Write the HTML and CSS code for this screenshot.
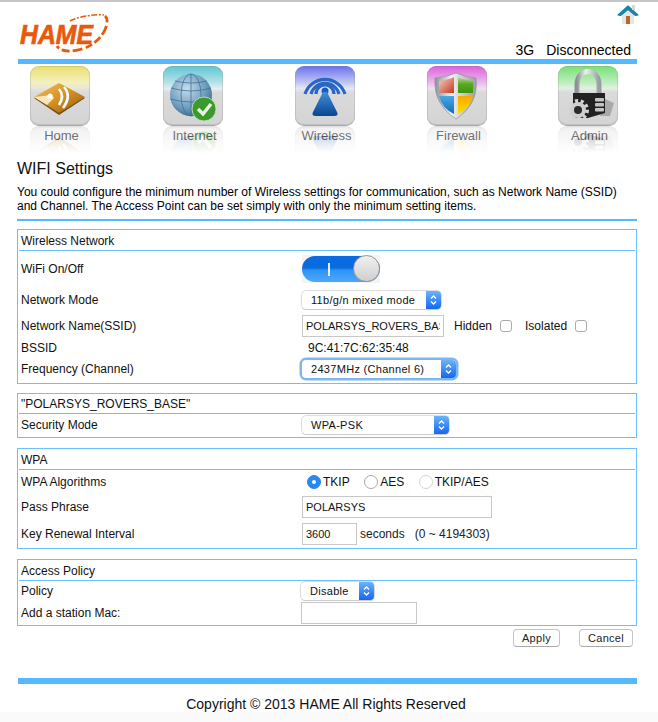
FILE: index.html
```html
<!DOCTYPE html>
<html lang="en">
<head>
<meta charset="utf-8">
<title>WIFI Settings</title>
<link rel="stylesheet" href="styles.css">
</head>
<body>
<svg class="defs" width="0" height="0" aria-hidden="true">
  <defs>
    <linearGradient id="gold" x1="0" y1="0" x2="1" y2="1"><stop offset="0" stop-color="#f0c060"/><stop offset=".5" stop-color="#d89020"/><stop offset="1" stop-color="#8a5a18"/></linearGradient>
    <radialGradient id="globe" cx=".4" cy=".35" r=".75"><stop offset="0" stop-color="#c8dcea"/><stop offset=".6" stop-color="#6f9dbd"/><stop offset="1" stop-color="#2f5f88"/></radialGradient>
    <linearGradient id="tower" x1="0" y1="0" x2="0" y2="1"><stop offset="0" stop-color="#3f8fd8"/><stop offset="1" stop-color="#0b4590"/></linearGradient>
    <linearGradient id="steel" x1="0" y1="0" x2="1" y2="0"><stop offset="0" stop-color="#8e9296"/><stop offset=".4" stop-color="#f0f0f0"/><stop offset="1" stop-color="#9a9ea2"/></linearGradient>
    <linearGradient id="qRed" x1="0" y1="0" x2="1" y2="1"><stop offset="0" stop-color="#f2d4c8"/><stop offset="1" stop-color="#c8381c"/></linearGradient>
    <linearGradient id="qGreen" x1="0" y1="0" x2="0" y2="1"><stop offset="0" stop-color="#b8dca0"/><stop offset=".45" stop-color="#5aa820"/><stop offset="1" stop-color="#3f9410"/></linearGradient>
    <linearGradient id="qBlue" x1="0" y1="0" x2="0" y2="1"><stop offset="0" stop-color="#49a8e8"/><stop offset="1" stop-color="#0f6cb8"/></linearGradient>
    <linearGradient id="qYellow" x1="0" y1="0" x2="0" y2="1"><stop offset="0" stop-color="#f8a800"/><stop offset="1" stop-color="#fbe000"/></linearGradient>
    <linearGradient id="blueBtn" x1="0" y1="0" x2="0" y2="1"><stop offset="0" stop-color="#6cb2fb"/><stop offset="1" stop-color="#1568ee"/></linearGradient>
  </defs>
</svg>
<div class="page">
  <header class="top">
    <svg class="logo" width="90" height="42" viewBox="0 0 90 42">
      <text class="logo-text" x="0" y="30" textLength="73" lengthAdjust="spacingAndGlyphs">HAME</text>
      <path d="M50 7 C60 2 76 0 84 1" fill="none" stroke="#e8590c" stroke-width="1.4" stroke-dasharray="6 1.5 2 1.5"/>
      <path d="M85 2 C90 6 86 20 74 29 C64 37 42 41 37 32" fill="none" stroke="#e8590c" stroke-width="2.8" stroke-dasharray="7 3.5 10 3 8 3"/>
    </svg>
    <div class="top-right">
      <svg class="home-link" width="22" height="21" viewBox="0 0 22 21">
        <rect x="5" y="8" width="12" height="12" fill="#e6e6e6"/>
        <rect x="9" y="12" width="4" height="8" fill="#b8682a"/>
        <path d="M1 11 L11 2 L21 11 L18.5 11.5 L11 5.5 L3.5 11.5 Z" fill="#1b84a8" stroke="#1b84a8" stroke-width="1.2" stroke-linejoin="round"/>
        <rect x="15" y="1" width="3" height="5" fill="#d8d8d8"/>
      </svg>
      <div class="status"><span>3G</span><span>Disconnected</span></div>
    </div>
  </header>
  <div class="bar"></div>
  <nav class="nav">
    <a class="nav-item">
      <div class="tile tile-home">
        <svg width="60" height="60" viewBox="0 0 60 60">
          <path d="M4 32 L29 19 L55 32 L29 49 Z" fill="#7a4d14"/>
          <path d="M4 31 L29 17 L55 31 L29 47 Z" fill="url(#gold)"/>
          <path d="M4 31 L22 29 L24 32 L17 39 Z" fill="#fff3d8" opacity=".85"/>
          <circle cx="20" cy="30" r="2.6" fill="#fff"/>
          <path d="M29 23 Q35 30 29 39 M34 21 Q42 30 33 42" fill="none" stroke="#fff" stroke-width="2.6"/>
        </svg>
      </div>
      <span class="nav-label">Home</span>
    </a>
    <a class="nav-item">
      <div class="tile tile-internet">
        <svg width="60" height="60" viewBox="0 0 60 60">
          <circle cx="28" cy="29" r="21" fill="url(#globe)"/>
          <g fill="none" stroke="#3d6f96" stroke-width=".9" opacity=".85">
            <ellipse cx="28" cy="29" rx="10" ry="21"/><path d="M28 8 V50 M8 22 Q28 28 48 22 M7 33 Q28 39 49 33 M12 15 Q28 19 44 15"/>
          </g>
          <circle cx="41" cy="43" r="12" fill="#3c9a2c" stroke="#cfe9c2" stroke-width=".8"/>
          <path d="M35 43 L40 48 L48 38" fill="none" stroke="#e8f5e0" stroke-width="3.4"/>
        </svg>
      </div>
      <span class="nav-label">Internet</span>
    </a>
    <a class="nav-item">
      <div class="tile tile-wireless">
        <svg width="60" height="60" viewBox="0 0 60 60">
          <g fill="none" stroke="#2a66c4" stroke-width="3.2">
            <path d="M10 28 A21 21 0 0 1 50 28"/><path d="M16 28 A14.5 14.5 0 0 1 44 28"/><path d="M21 28 A9 9 0 0 1 39 28"/>
          </g>
          <circle cx="30" cy="25" r="3.5" fill="#1c5cb8"/>
          <path d="M28 26 H32 L42 46 Q44 50 39 50 H21 Q16 50 18 46 Z" fill="url(#tower)"/>
        </svg>
      </div>
      <span class="nav-label">Wireless</span>
    </a>
    <a class="nav-item">
      <div class="tile tile-firewall">
        <svg width="60" height="60" viewBox="0 0 60 60">
          <path d="M8 12 Q20 11 29 7 Q38 11 49 12 Q52 38 29 53 Q6 38 8 12 Z" fill="url(#steel)" stroke="#8a8a8a" stroke-width=".6"/>
          <path d="M12 15 Q21 14 27 11 V27 H12 Z" fill="url(#qRed)"/>
          <path d="M31 11 Q37 14 46 15 Q46.5 21 46 27 H31 Z" fill="url(#qGreen)"/>
          <path d="M12 30 H27 V48 Q15 42 12 30 Z" fill="url(#qBlue)"/>
          <path d="M31 30 H46 Q43 42 31 48 Z" fill="url(#qYellow)"/>
        </svg>
      </div>
      <span class="nav-label">Firewall</span>
    </a>
    <a class="nav-item">
      <div class="tile tile-admin">
        <svg width="60" height="60" viewBox="0 0 60 60">
          <path d="M47 33 L56 37 L52 50 L42 50 Z" fill="#a9a9a9"/>
          <path d="M19 30 V18 A10.5 12 0 0 1 41 18 V30" fill="none" stroke="url(#steel)" stroke-width="5"/>
          <path d="M15 27 H47 V47 L30 52 H15 Z" fill="#222"/>
          <g fill="#c4c4c4"><rect x="37" y="32" width="9" height="3.5" rx="1"/><rect x="37" y="37" width="9" height="3.5" rx="1"/><rect x="37" y="42" width="9" height="3.5" rx="1"/></g>
          <circle cx="20" cy="44" r="9" fill="none" stroke="#d4d4d4" stroke-width="4" stroke-dasharray="3 2.6"/>
          <circle cx="20" cy="44" r="8" fill="#cfcfcf"/>
          <circle cx="20" cy="44" r="4" fill="#2a2a2a"/>
        </svg>
      </div>
      <span class="nav-label">Admin</span>
    </a>
  </nav>

  <main class="content">
    <h1 class="title">WIFI Settings</h1>
    <p class="intro">You could configure the minimum number of Wireless settings for communication, such as Network Name (SSID) and Channel. The Access Point can be set simply with only the minimum setting items.</p>
    <div class="rule"></div>

    <section class="box box-first">
      <div class="box-head">Wireless Network</div>
      <div class="row h-36"><span>WiFi On/Off</span>
        <div class="toggle"><div class="toggle-track"><span class="toggle-mark"></span><span class="toggle-knob"></span></div></div>
      </div>
      <div class="row h-26"><span>Network Mode</span>
        <div class="select w-139"><span class="select-text">11b/g/n mixed mode</span><svg class="select-arrow" width="15" height="18" viewBox="0 0 15 18"><path d="M0 0 H11 Q15 0 15 4 V14 Q15 18 11 18 H0 Z" fill="url(#blueBtn)"/><path d="M5 7.5 L7.5 5 L10 7.5 M5 10.5 L7.5 13 L10 10.5" fill="none" stroke="#fff" stroke-width="1.3"/></svg></div>
      </div>
      <div class="row h-25"><span>Network Name(SSID)</span>
        <div class="inline">
          <input class="field w-142" type="text" value="POLARSYS_ROVERS_BASE" readonly>
          <span class="check-label">Hidden</span><input class="check" type="checkbox">
          <span class="check-label gap">Isolated</span><input class="check" type="checkbox">
        </div>
      </div>
      <div class="row h-20"><span>BSSID</span><span class="mac">9C:41:7C:62:35:48</span></div>
      <div class="row h-22"><span>Frequency (Channel)</span>
        <div class="select w-154 focus"><span class="select-text">2437MHz (Channel 6)</span><svg class="select-arrow" width="15" height="18" viewBox="0 0 15 18"><path d="M0 0 H11 Q15 0 15 4 V14 Q15 18 11 18 H0 Z" fill="url(#blueBtn)"/><path d="M5 7.5 L7.5 5 L10 7.5 M5 10.5 L7.5 13 L10 10.5" fill="none" stroke="#fff" stroke-width="1.3"/></svg></div>
      </div>
      <div class="box-end"></div>
    </section>

    <section class="box box-second">
      <div class="box-head h-19">"POLARSYS_ROVERS_BASE"</div>
      <div class="row h-23 row-lift"><span>Security Mode</span>
        <div class="select w-147"><span class="select-text">WPA-PSK</span><svg class="select-arrow" width="15" height="18" viewBox="0 0 15 18"><path d="M0 0 H11 Q15 0 15 4 V14 Q15 18 11 18 H0 Z" fill="url(#blueBtn)"/><path d="M5 7.5 L7.5 5 L10 7.5 M5 10.5 L7.5 13 L10 10.5" fill="none" stroke="#fff" stroke-width="1.3"/></svg></div>
      </div>
    </section>

    <section class="box box-next">
      <div class="box-head">WPA</div>
      <div class="row h-24"><span>WPA Algorithms</span>
        <div class="radios">
          <span class="radio on"></span><span>TKIP</span>
          <span class="radio"></span><span>AES</span>
          <span class="radio faint"></span><span>TKIP/AES</span>
        </div>
      </div>
      <div class="row h-25"><span>Pass Phrase</span><input class="field w-190" type="text" value="POLARSYS" readonly></div>
      <div class="row h-29"><span>Key Renewal Interval</span>
        <div class="inline"><input class="field w-55" type="text" value="3600" readonly><span class="unit">seconds</span><span class="range">(0 ~ 4194303)</span></div>
      </div>
    </section>

    <section class="box box-next">
      <div class="box-head">Access Policy</div>
      <div class="row row-tight h-20"><span>Policy</span>
        <div class="select w-73"><span class="select-text">Disable</span><svg class="select-arrow" width="15" height="18" viewBox="0 0 15 18"><path d="M0 0 H11 Q15 0 15 4 V14 Q15 18 11 18 H0 Z" fill="url(#blueBtn)"/><path d="M5 7.5 L7.5 5 L10 7.5 M5 10.5 L7.5 13 L10 10.5" fill="none" stroke="#fff" stroke-width="1.3"/></svg></div>
      </div>
      <div class="row row-tight h-24"><span>Add a station Mac:</span><input class="field w-116" type="text"></div>
    </section>

    <div class="actions">
      <button class="btn w-47" type="button">Apply</button>
      <button class="btn w-54" type="button">Cancel</button>
    </div>
  </main>
  <div class="bar bar-foot"></div>
  <footer class="footer">Copyright © 2013 HAME All Rights Reserved</footer>
</div>
<div class="under"></div>
</body>
</html>
```

FILE: styles.css
```css
* { box-sizing: border-box; }
html, body { margin: 0; padding: 0; background: #fff; }
body {
  border-top: 2px solid #c6c6c6;
  height: 722px;
  overflow: hidden;
  font-family: "Liberation Sans", Arial, sans-serif;
  font-size: 12px;
  color: #111;
}
.defs { position: absolute; }
.page { width: 658px; height: 710px; }

.top {
  height: 57px;
  margin-left: 20px;
  margin-right: 20px;
  display: flex;
  justify-content: space-between;
}
.logo { margin-top: 12px; overflow: visible; }
.logo-text { font: italic bold 27px "Liberation Sans", Arial, sans-serif; fill: #e8590c; stroke: #e8590c; stroke-width: .7px; }
.top-right { display: flex; flex-direction: column; align-items: flex-end; justify-content: space-between; }
.home-link { margin-top: 2px; margin-right: -1px; }
.status { display: flex; gap: 12px; font-size: 14px; color: #000; line-height: 16px; margin-right: 7px; margin-bottom: 1px; }

.bar { height: 5px; margin-left: 18px; width: 619px; background: #55b9ff; }
.nav {
  display: grid;
  grid-template-columns: 133px 132px 132px 131px 60px;
  margin: 2px 0 0 30px;
  height: 88px;
}
.nav-item { display: block; width: 60px; }
.tile {
  width: 60px;
  height: 60px;
  border-radius: 9px;
  border-bottom: 1px solid #a8a8a8;
  box-shadow: inset 0 0 0 1px rgba(130,130,130,.25);
  -webkit-box-reflect: below 0 linear-gradient(transparent 55%, rgba(255,255,255,.35));
}
.tile svg { display: block; }
.tile-home { background: linear-gradient(#ecdf6c 0, #f4f0c0 28%, #e8e6d6 38%, #dadada 45%, #d4d4d4 100%); }
.tile-internet { background: linear-gradient(#5fc6d4 0, #b4e2e8 28%, #e2eef0 38%, #dadada 45%, #d4d4d4 100%); }
.tile-wireless { background: linear-gradient(#6a70ec 0, #c0c6f4 28%, #e6e8f4 38%, #dadada 45%, #d4d4d4 100%); }
.tile-firewall { background: linear-gradient(#dc60dc 0, #eab8ec 28%, #eee0ee 38%, #dadada 45%, #d4d4d4 100%); }
.tile-admin { background: linear-gradient(#78e078 0, #bdeebd 28%, #e2f0e2 38%, #dadada 45%, #d4d4d4 100%); }
.nav-label { display: block; text-align: center; font-size: 13px; line-height: 16px; color: #555; margin-top: 2px; padding-left: 3px; white-space: nowrap; }

.content { margin-left: 17px; width: 620px; }
.title { margin: 0; font-size: 16px; font-weight: normal; line-height: 20px; padding-top: 5px; color: #111; }
.intro { margin: 6px 0 0; font-size: 12px; line-height: 14px; color: #000; height: 28px; white-space: normal; }
.rule { height: 2px; margin-top: 6px; background: #55b9ff; }

.box { border: 1px solid #6cc0ff; }
.box-first { margin-top: 8px; }
.box-second { margin-top: 9px; }
.box-next { margin-top: 10px; }
.box-head { height: 21px; line-height: 22px; border-bottom: 1px solid #6cc0ff; margin-left: 1px; margin-right: 1px; padding-left: 2px; }
.box-head.h-19 { height: 20px; line-height: 21px; }
.box-end { height: 3px; }

.row { display: grid; grid-template-columns: 281px 1fr; align-items: center; padding-left: 3px; }
.row-tight { grid-template-columns: 280px 1fr; }
.row-lift { padding-bottom: 1px; }
.h-20 { height: 20px; } .h-22 { height: 22px; } .h-23 { height: 23px; } .h-24 { height: 24px; }
.h-25 { height: 25px; } .h-26 { height: 26px; } .h-29 { height: 29px; } .h-36 { height: 36px; }

.inline { display: flex; align-items: center; }
.field { height: 22px; border: 1px solid #c8c8c8; padding: 0 3px; font: 11px "Liberation Sans", Arial, sans-serif; color: #111; background: #fff; outline: 0; border-radius: 0; }
.w-142 { width: 142px; } .w-190 { width: 190px; } .w-55 { width: 55px; } .w-116 { width: 116px; }

.select {
  position: relative;
  height: 18px;
  background: #fff;
  border-radius: 4px;
  box-shadow: 0 0 0 .5px #bbb, 0 1px 1px rgba(0,0,0,.15);
  padding-left: 9px;
  font-size: 11px;
  letter-spacing: .3px;
  line-height: 18px;
  color: #111;
}
.select-arrow { position: absolute; right: 0; top: 0; }
.focus { box-shadow: 0 0 0 2.5px #7db5f5; }
.w-139 { width: 139px; } .w-154 { width: 154px; } .w-147 { width: 147px; } .w-73 { width: 73px; }

.check-label { margin-left: 10px; }
.check-label.gap { margin-left: 13px; }
.check { appearance: none; -webkit-appearance: none; width: 12px; height: 12px; margin: 0 0 0 8px; border: 1px solid #aaa; border-radius: 3px; background: #fff; }
.mac { margin-left: 6px; }

.toggle { width: 78px; height: 28px; background: #f4f4f4; padding: 1px 0 0 0; }
.toggle-track {
  position: relative;
  width: 78px;
  height: 26px;
  border-radius: 13px;
  background: linear-gradient(#0a6ae0 0, #0a6ae0 45%, #2f94f5 55%, #4ea8f8 100%);
}
.toggle-mark { position: absolute; left: 26px; top: 7px; width: 2px; height: 13px; background: #e8f2ff; }
.toggle-knob {
  position: absolute;
  right: 0;
  top: -1px;
  width: 27px;
  height: 27px;
  border-radius: 50%;
  background: linear-gradient(#f0f0f0, #cfcfcf);
  border: 1px solid #999;
}

.radios { display: flex; align-items: center; padding-left: 5px; }
.radio { width: 14px; height: 14px; border-radius: 50%; border: 1px solid #aaa; background: #fff; margin-right: 2px; margin-left: 14.5px; }
.radio:first-child { margin-left: 0; }
.radio.on { position: relative; background: #2a86f2; border-color: #2a86f2; }
.radio.on::after { content: ""; position: absolute; left: 4px; top: 4px; width: 4px; height: 4px; border-radius: 50%; background: #fff; }
.radio.faint { border-color: #d4d4d4; }
.unit { margin-left: 3px; color: #222; }
.range { margin-left: 10px; color: #222; }

.actions { display: flex; justify-content: flex-end; gap: 19px; margin-top: 3px; padding-right: 4px; }
.btn { height: 18px; padding: 0; background: #fff; border: 1px solid #c4c4c4; border-bottom-color: #aaa; border-radius: 4px; font: 11px "Liberation Sans", Arial, sans-serif; letter-spacing: .3px; color: #222; }
.w-47 { width: 47px; } .w-54 { width: 54px; }

.bar-foot { height: 6px; margin-top: 31px; }
.footer { text-align: center; font-size: 14px; line-height: 16px; color: #111; margin-top: 12px; padding-right: 6px; }
.under { height: 12px; background: #fafafa; }
```
